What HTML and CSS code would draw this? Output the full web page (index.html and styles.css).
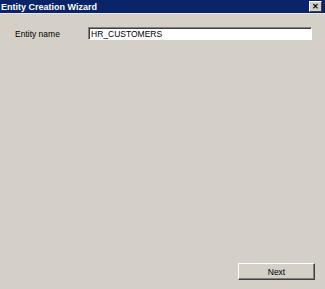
FILE: index.html
```html
<!DOCTYPE html>
<html>
  <head>
    <title>Entity Creation Wizard</title>
    <meta charset="utf-8">
    <link rel="stylesheet" href="styles.css">
  </head>
<body>
<div class="window">
  <div class="titlebar">
    <span class="title">Entity Creation Wizard</span>
    <span class="close">&#x2715;</span>
  </div>
  <div class="content">
    <div class="field">
      <label for="name">Entity name</label>
      <input id="name" type="text" value="HR_CUSTOMERS" spellcheck="false">
    </div>
  </div>
  <div class="footer">
    <button id="next">Next</button>
  </div>
</div>
</body>
</html>
```

FILE: styles.css
```css
body {
  margin: 0;
  padding: 0;
  font-family: "Liberation Sans", Arial, sans-serif;
  font-size: 8.5px;
  background-color: #d4d0c8;
}
.window {
  width: 325px;
  height: 289px;
  display: flex;
  flex-direction: column;
  background-color: #d4d0c8;
}
.titlebar {
  height: 13px;
  background-color: #0a246a;
  border-bottom: 1px solid #ece9e2;
  display: flex;
  align-items: center;
  justify-content: space-between;
  padding: 0 3px 0 1px;
}
.title {
  color: #fff;
  font-weight: bold;
  font-size: 9px;
}
.close {
  width: 13px;
  height: 11px;
  background-color: #d4d0c8;
  border: 1px solid;
  border-color: #fff #404040 #404040 #fff;
  box-sizing: border-box;
  font-size: 8px;
  font-weight: bold;
  line-height: 9px;
  text-align: center;
  color: #000;
}
.content {
  flex: 1;
  padding: 13px 13px 0 15px;
}
.field {
  display: flex;
  align-items: center;
}
label {
  width: 73px;
  color: #000;
}
input {
  width: 224px;
  height: 13px;
  box-sizing: border-box;
  margin: 0;
  padding: 0 0 0 2px;
  font-family: "Liberation Sans", Arial, sans-serif;
  font-size: 8.5px;
  line-height: 11px;
  color: #000;
  background: #fff;
  border: 1px solid;
  border-color: #808080 #fff #fff #808080;
  box-shadow: inset 1px 1px 0 #404040;
  outline: none;
}
.footer {
  display: flex;
  justify-content: flex-end;
  padding: 0 10px 9px 0;
}
button {
  width: 77px;
  height: 17px;
  margin: 0;
  padding: 0;
  font-family: "Liberation Sans", Arial, sans-serif;
  font-size: 8.5px;
  color: #000;
  background-color: #d4d0c8;
  border: 1px solid;
  border-color: #fff #404040 #404040 #fff;
  box-shadow: inset -1px -1px 0 #808080;
}
```
